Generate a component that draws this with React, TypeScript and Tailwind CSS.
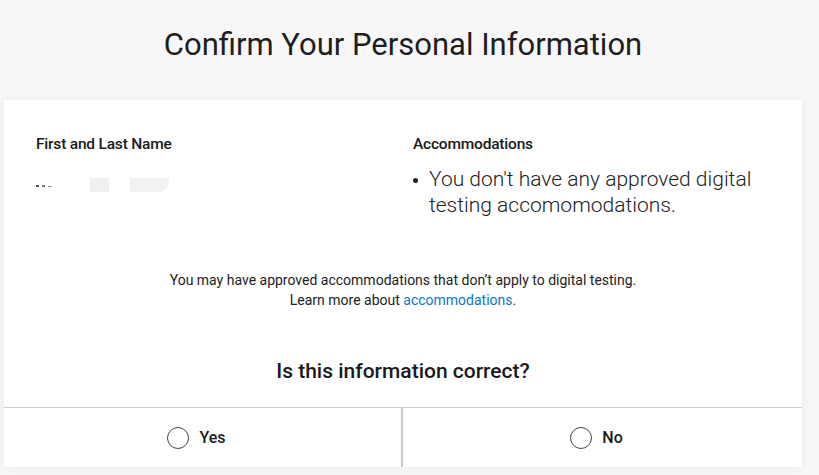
export default function App() {
  return (
    <div
      className="min-h-[475px] w-full bg-[#f7f7f7] text-[#222]"
      style={{ fontFamily: 'Roboto, "Liberation Sans", sans-serif' }}
    >
      <div className="w-[806px]">
        <h1 className="pt-[25px] pb-[35px] text-center text-[31px] font-normal leading-[40px] text-[#1e1e1e]">
          Confirm Your Personal Information
        </h1>

        <div className="ml-[4px] w-[798px] bg-white shadow-[0_0_10px_rgba(0,0,0,0.06)]">
          <div className="grid grid-cols-2 pt-[35px]">
            {/* Name (redacted) */}
            <div className="pl-[32px]">
              <h2 className="text-[15.5px] font-medium leading-[18px] tracking-[-0.2px] text-[#1a1a1a]">
                First and Last Name
              </h2>
              <div className="mt-[24px] flex h-[16px] items-center">
                <span className="mt-[2px] h-[2px] w-[3px] bg-[#555]" />
                <span className="ml-[3px] mt-[2px] h-[2px] w-[3px] bg-[#777]" />
                <span className="ml-[3px] mt-[3px] h-[1px] w-[4px] bg-[#999]" />
                <span className="ml-[38px] h-[14px] w-[19px] bg-[#f0f0f0]" />
                <span className="ml-[21px] h-[14px] w-[39px] rounded-br-[10px] bg-[#f2f2f2]" />
              </div>
            </div>

            {/* Accommodations */}
            <div className="pl-[10px] pr-[30px]">
              <h2 className="text-[15.5px] font-medium leading-[18px] tracking-[-0.2px] text-[#1a1a1a]">
                Accommodations
              </h2>
              <ul className="mt-[13px] flex flex-col">
                <li className="flex text-[21px] font-light leading-[26px] text-[#222]">
                  <span className="flex h-[26px] w-[16px] shrink-0 items-center">
                    <span className="mt-[2px] h-[5px] w-[5px] rounded-full bg-[#222]" />
                  </span>
                  <span>You don't have any approved digital testing accomomodations.</span>
                </li>
              </ul>
            </div>
          </div>

          <p className="mt-[52px] text-center text-[14px] leading-[20px] text-[#222]">
            You may have approved accommodations that don’t apply to digital testing.
            <br />
            Learn more about <a className="text-[#0a77c9]">accommodations</a>.
          </p>

          <h3 className="mt-[49px] text-center text-[21px] font-medium leading-[24px] text-[#1a1a1a]">
            Is this information correct?
          </h3>

          <div className="mt-[24px] grid grid-cols-2 border-t border-[#cfcfcf]">
            <label className="flex h-[59px] items-center justify-center gap-[10px] border-r-2 border-[#c8c8c8] pr-[12px]">
              <span className="h-[22px] w-[22px] rounded-full border-[1.5px] border-[#444]" />
              <span className="text-[16px] font-medium text-[#1a1a1a]">Yes</span>
            </label>
            <label className="flex h-[59px] items-center justify-center gap-[10px] pr-[12px]">
              <span className="h-[22px] w-[22px] rounded-full border-[1.5px] border-[#444]" />
              <span className="text-[16px] font-medium text-[#1a1a1a]">No</span>
            </label>
          </div>
        </div>
      </div>
    </div>
  );
}
